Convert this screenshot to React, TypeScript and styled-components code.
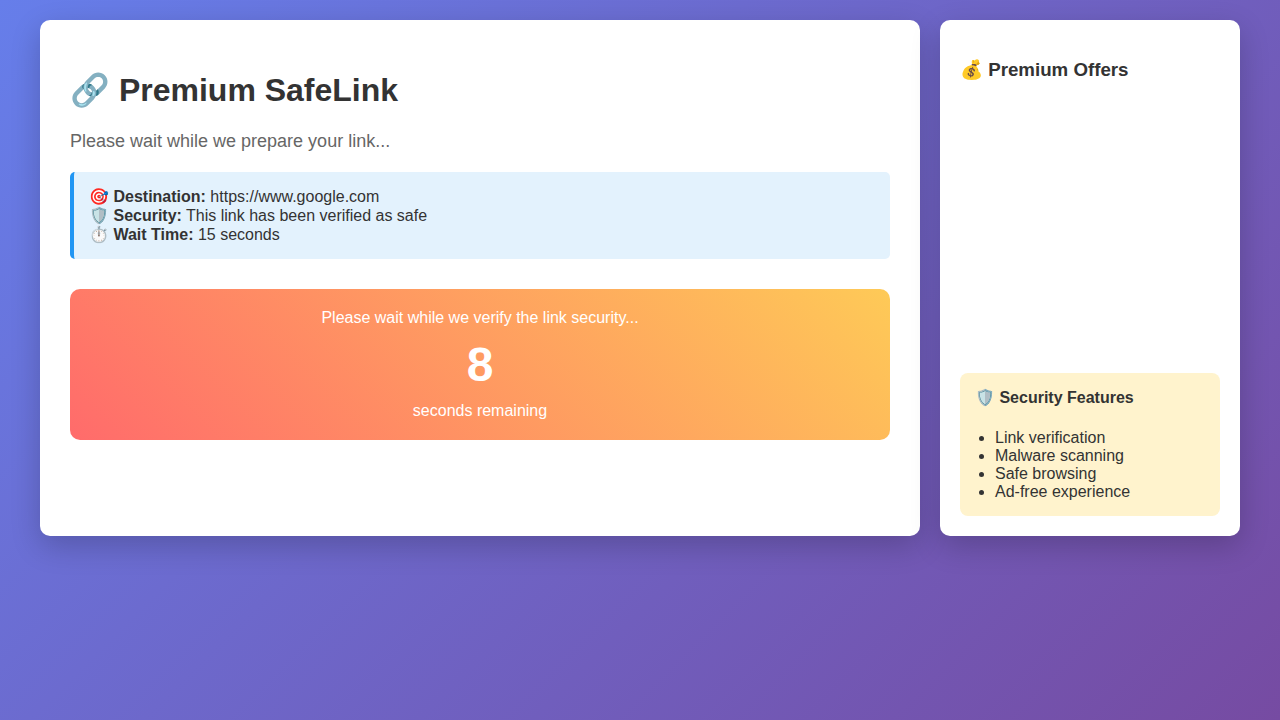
import React from "react";
import styled, { createGlobalStyle } from "styled-components";

const GlobalStyle = createGlobalStyle`
  * { box-sizing: border-box; }
  body {
    margin: 0;
    min-height: 100vh;
    padding: 20px;
    font-family: Arial, "Liberation Sans", sans-serif;
    font-size: 16px;
    color: #333;
    background: linear-gradient(135deg, #667eea 0%, #764ba2 100%);
  }
`;

const Page = styled.div`
  max-width: 1200px;
  margin: 0 auto;
  display: grid;
  grid-template-columns: minmax(0, 1fr) 300px;
  gap: 20px;
`;

const Panel = styled.main`
  background: #fff;
  border-radius: 10px;
  padding: 30px;
  box-shadow: 0 10px 30px rgba(0, 0, 0, 0.2);
`;

const Sidebar = styled(Panel).attrs({ as: "aside" })`
  padding: 20px;
`;

const Title = styled.h1`
  margin: 21px 0 22px;
  font-size: 32px;
`;

const Lead = styled.p`
  margin: 0 0 20px;
  font-size: 18px;
  color: #666;
`;

const InfoBox = styled.div`
  padding: 15px;
  border-left: 4px solid #2196f3;
  border-radius: 5px;
  background: #e3f2fd;
`;

const InfoLine = styled.div`
  line-height: 19px;
`;

const Countdown = styled.section`
  margin: 30px 0;
  padding: 20px;
  border-radius: 10px;
  text-align: center;
  color: #fff;
  background: linear-gradient(45deg, #ff6b6b, #feca57);
`;

const Seconds = styled.div`
  margin: 10px 0;
  font-size: 48px;
  font-weight: bold;
`;

/* Keeps the browser's own h3 size and margins. */
const OffersTitle = styled.h3`
  line-height: 22px;
`;

const AdSlot = styled.div`
  height: 250px;
  margin: 22px 0 20px;
`;

const Features = styled.section`
  padding: 15px;
  border-radius: 8px;
  background: #fff3cd;
`;

const FeaturesTitle = styled.h4`
  margin: 0 0 22px;
  font-size: 16px;
`;

const FeatureList = styled.ul`
  margin: 0;
  padding-left: 20px;
`;

const info = [
  ["🎯", "Destination:", "https://www.google.com"],
  ["🛡️", "Security:", "This link has been verified as safe"],
  ["⏱️", "Wait Time:", "15 seconds"],
];

const features = ["Link verification", "Malware scanning", "Safe browsing", "Ad-free experience"];

export default function App() {
  return (
    <>
      <GlobalStyle />
      <Page>
        <Panel>
          <Title>🔗 Premium SafeLink</Title>
          <Lead>Please wait while we prepare your link...</Lead>
          <InfoBox>
            {info.map(([icon, label, value]) => (
              <InfoLine key={label}>
                {icon} <strong>{label}</strong> {value}
              </InfoLine>
            ))}
          </InfoBox>
          <Countdown>
            <div>Please wait while we verify the link security...</div>
            <Seconds>8</Seconds>
            <div>seconds remaining</div>
          </Countdown>
        </Panel>
        <Sidebar>
          <OffersTitle>💰 Premium Offers</OffersTitle>
          <AdSlot />
          <Features>
            <FeaturesTitle>🛡️ Security Features</FeaturesTitle>
            <FeatureList>
              {features.map((feature) => (
                <li key={feature}>{feature}</li>
              ))}
            </FeatureList>
          </Features>
        </Sidebar>
      </Page>
    </>
  );
}
